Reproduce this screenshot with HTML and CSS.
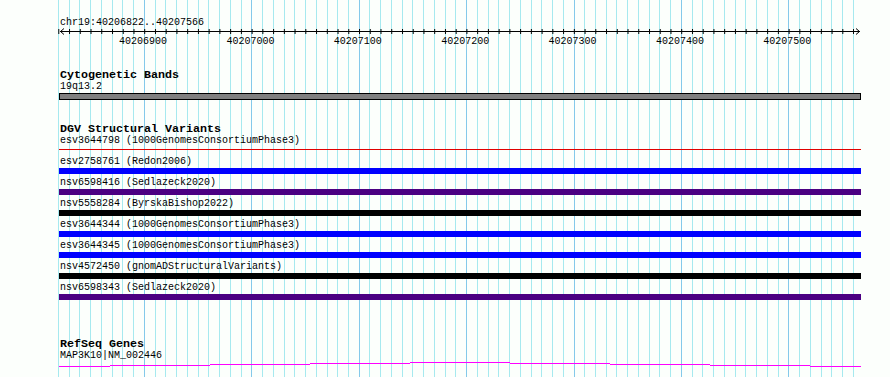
FILE: index.html
```html
<!DOCTYPE html>
<html lang="en">

<head>
    <meta charset="UTF-8">
    <meta name="viewport" content="width=device-width, initial-scale=1.0">
    <title>chr19:40206822..40207566</title>
    <link rel="stylesheet" href="styles.css">
</head>

<body>
    <div class="browser">
        <div class="lane">

            <!-- ruler -->
            <div class="ruler">
                <div class="label">chr19:40206822..40207566</div>
                <svg class="axis" width="804" height="7" viewBox="0 0 804 7">
                    <defs>
                        <pattern id="tick" x="0.3" y="0" width="10.74" height="7" patternUnits="userSpaceOnUse">
                            <rect x="0" y="1" width="1" height="5" fill="#000" />
                        </pattern>
                    </defs>
                    <rect x="0" y="0" width="796" height="7" fill="url(#tick)" />
                    <path d="M2 3.5H802" stroke="#000" stroke-width="1" />
                    <path d="M6 0.5L2.5 3.5L6 6.5M798 0.5L801.5 3.5L798 6.5" fill="none" stroke="#000" stroke-width="1" />
                </svg>
                <div class="numbers">
                    <span>40206900</span>
                    <span>40207000</span>
                    <span>40207100</span>
                    <span>40207200</span>
                    <span>40207300</span>
                    <span>40207400</span>
                    <span>40207500</span>
                </div>
            </div>

            <!-- cytogenetic bands -->
            <section class="track cyto">
                <h3 class="title">Cytogenetic Bands</h3>
                <div class="label">19q13.2</div>
                <div class="band"></div>
            </section>

            <!-- DGV -->
            <section class="track dgv">
                <h3 class="title">DGV Structural Variants</h3>
                <div class="feature">
                    <div class="label">esv3644798 (1000GenomesConsortiumPhase3)</div>
                    <div class="bar thin"></div>
                </div>
                <div class="feature">
                    <div class="label">esv2758761 (Redon2006)</div>
                    <div class="bar blue"></div>
                </div>
                <div class="feature">
                    <div class="label">nsv6598416 (Sedlazeck2020)</div>
                    <div class="bar purple"></div>
                </div>
                <div class="feature">
                    <div class="label">nsv5558284 (ByrskaBishop2022)</div>
                    <div class="bar black"></div>
                </div>
                <div class="feature">
                    <div class="label">esv3644344 (1000GenomesConsortiumPhase3)</div>
                    <div class="bar blue"></div>
                </div>
                <div class="feature">
                    <div class="label">esv3644345 (1000GenomesConsortiumPhase3)</div>
                    <div class="bar blue"></div>
                </div>
                <div class="feature">
                    <div class="label">nsv4572450 (gnomADStructuralVariants)</div>
                    <div class="bar black"></div>
                </div>
                <div class="feature">
                    <div class="label">nsv6598343 (Sedlazeck2020)</div>
                    <div class="bar purple"></div>
                </div>
            </section>

            <!-- refseq -->
            <section class="track refseq">
                <h3 class="title">RefSeq Genes</h3>
                <div class="label">MAP3K10|NM_002446</div>
                <svg class="gene" width="802" height="8" viewBox="0 0 802 8">
                    <path d="M0 6.5H51M51 5.5H151M151 4.5H251M251 3.5H351M351 2.5H451M451 3.5H551M551 4.5H651M651 5.5H751M751 6.5H802"
                        fill="none" stroke="#ff00ff" stroke-width="1" />
                </svg>
            </section>

        </div>
    </div>
</body>

</html>
```

FILE: styles.css
```css
body {
    margin: 0;
    background-color: #fcfffc;
    font-family: "Liberation Mono", "DejaVu Sans Mono", monospace;
    color: #000;
}

.browser {
    width: 890px;
    height: 377px;
    overflow: hidden;
    background-color: #fcfffc;
    background-image:
        repeating-linear-gradient(90deg, #84c9ea 0 1px, transparent 1px 107.4px),
        repeating-linear-gradient(90deg, #a6e9ef 0 1px, transparent 1px 10.74px);
    background-position: 144px 0, 58.3px 0;
    background-size: 646px 100%, 796px 100%;
    background-repeat: no-repeat;
}

.lane {
    margin-left: 59px;
    width: 802px;
    padding-top: 16px;
}

.label {
    font-size: 10px;
    line-height: 12px;
    padding-left: 1px;
    white-space: nowrap;
}

.ruler .label {
    line-height: 13px;
}

.axis {
    display: block;
    margin: -1px 0 0 -1px;
}

.numbers {
    display: flex;
    padding-left: 30.3px;
    font-size: 10px;
    line-height: 13px;
}

.numbers span {
    flex: none;
    width: 107.4px;
    text-align: center;
}

.title {
    margin: 0;
    font-size: 11.67px;
    font-weight: bold;
    line-height: 12px;
    padding-left: 1px;
    white-space: nowrap;
}

.cyto {
    margin-top: 21px;
}

.band {
    height: 5px;
    border: 1px solid #000;
    background-color: #808080;
}

.dgv {
    margin-top: 24px;
}

.dgv .title {
    line-height: 11px;
}

.feature {
    margin-bottom: 3px;
}

.bar {
    height: 6px;
}

/* thin line drawn in the middle of the row slot */
.bar.thin {
    background: linear-gradient(#e00000, #e00000) 0 2px / 100% 1px no-repeat;
}

.bar.blue {
    background-color: #0000ff;
}

.bar.purple {
    background-color: #4b0082;
}

.bar.black {
    background-color: #000;
}

.refseq {
    margin-top: 39px;
}

.refseq .title {
    line-height: 11px;
}

.gene {
    display: block;
    margin-top: -2px;
}
```
